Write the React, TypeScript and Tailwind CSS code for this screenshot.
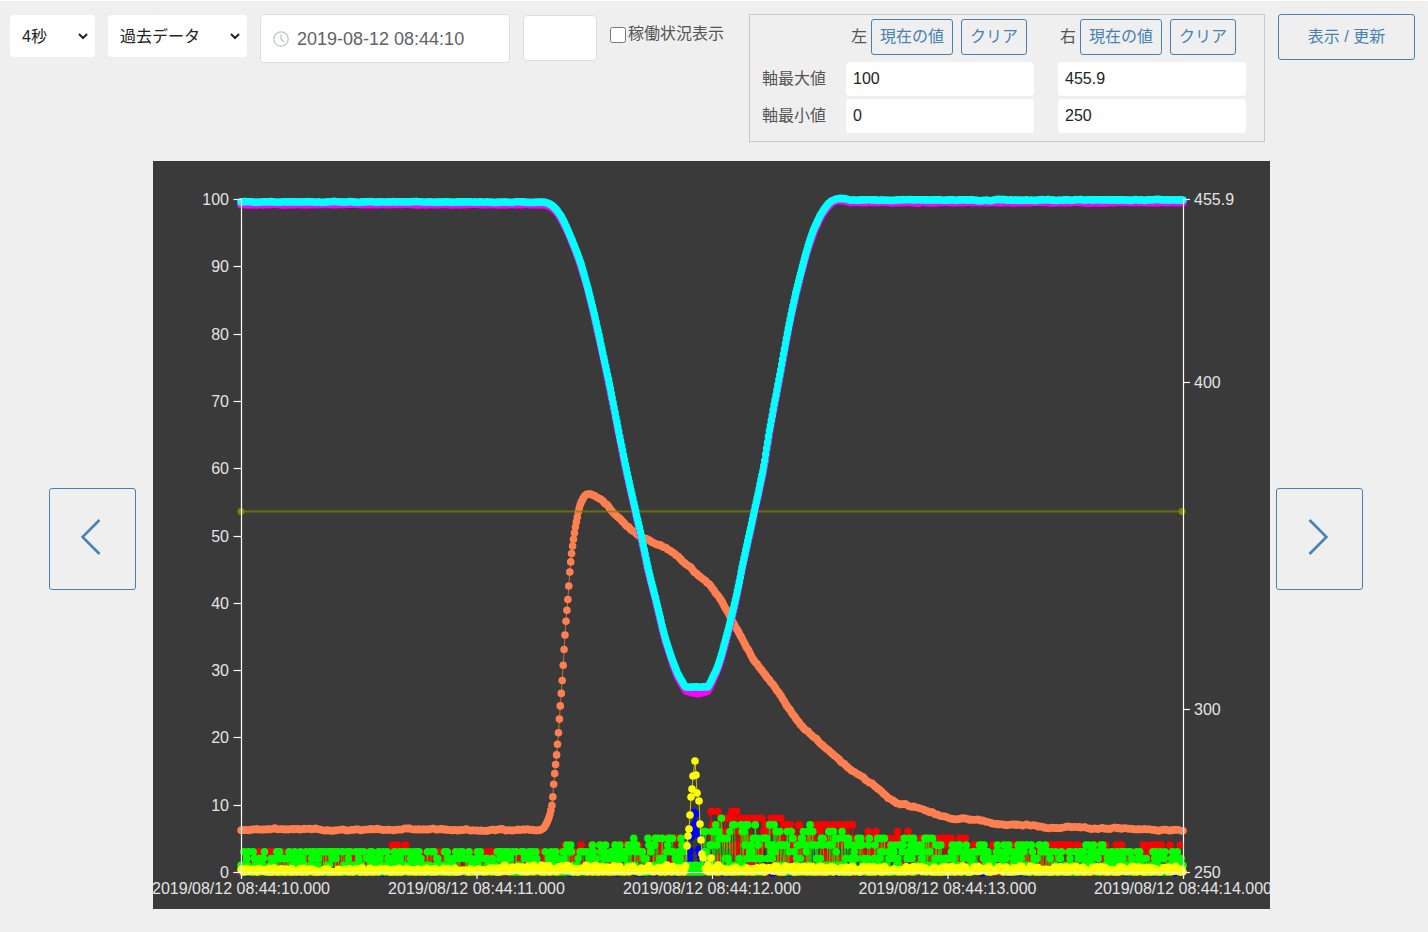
type Point = [number, number];

// plot area inside the 1117 x 748 chart
const LEFT = 88;
const RIGHT = 1030;
const TOP = 38;
const BOTTOM = 711;
const SAMPLES = 1000;

const xAt = (i: number) => LEFT + ((RIGHT - LEFT) * i) / SAMPLES;
const yAt = (value: number) => BOTTOM - ((BOTTOM - TOP) * value) / 100;

// small seeded generator so the noise is the same on every render
function createRandom(seed: number) {
  let s = seed * 7919;
  return () => {
    s = (s + 0x6d2b79f5) | 0;
    let t = Math.imul(s ^ (s >>> 15), 1 | s);
    t = (t + Math.imul(t ^ (t >>> 7), 61 | t)) ^ t;
    return ((t ^ (t >>> 14)) >>> 0) / 4294967296;
  };
}

function slope(points: Point[], i: number) {
  const a = points[Math.max(i - 1, 0)];
  const b = points[Math.min(i + 1, points.length - 1)];
  return (b[1] - a[1]) / (b[0] - a[0]);
}

// hermite curve through the points
function curve(points: Point[], x: number) {
  if (x <= points[0][0]) return points[0][1];
  for (let i = 0; i < points.length - 1; i++) {
    const [x0, y0] = points[i];
    const [x1, y1] = points[i + 1];
    if (x > x1) continue;
    const h = x1 - x0;
    const t = (x - x0) / h;
    if (y0 === y1) return y0;
    const m0 = slope(points, i) * h;
    const m1 = slope(points, i + 1) * h;
    const t2 = t * t;
    const t3 = t2 * t;
    return (
      (2 * t3 - 3 * t2 + 1) * y0 +
      (t3 - 2 * t2 + t) * m0 +
      (3 * t2 - 2 * t3) * y1 +
      (t3 - t2) * m1
    );
  }
  return points[points.length - 1][1];
}

function step(points: Point[], x: number) {
  let value = points[0][1];
  for (const [px, v] of points) if (x >= px) value = v;
  return value;
}

const pressureKeys: Point[] = [
  [88, 669], [140, 668], [200, 669], [270, 668], [330, 669], [380, 669], [388, 668], [394, 661],
  [399, 644], [401, 620], [403, 600], [405, 578], [407, 550], [409, 523], [411, 490], [413, 460],
  [415, 436], [417, 407], [420, 381], [424, 357], [427, 344], [431, 336], [437, 333], [444, 336],
  [453, 343], [467, 358], [482, 372], [494, 379], [504, 383], [517, 390], [534, 404], [547, 416],
  [559, 427], [567, 438], [584, 468], [600, 497], [614, 516], [627, 534], [647, 563], [667, 582],
  [697, 608], [711, 617], [727, 629], [740, 640], [757, 645], [774, 650], [797, 657], [822, 659],
  [850, 664], [874, 664], [899, 667], [920, 666], [940, 668], [974, 667], [990, 669], [1030, 669],
];

const positionKeys: Point[] = [
  [88, 41], [385, 41], [395, 42], [402, 47], [409, 57], [417, 74], [427, 100], [437, 135],
  [447, 179], [457, 226], [467, 277], [474, 311], [482, 347], [489, 378], [495, 407], [504, 443],
  [512, 476], [522, 506], [529, 520], [534, 526], [554, 526], [560, 516], [567, 499], [577, 462],
  [584, 432], [590, 402], [600, 356], [610, 309], [617, 267], [627, 213], [637, 159], [647, 115],
  [657, 79], [667, 55], [675, 43], [682, 38], [690, 37], [698, 39], [1030, 39],
];

const greenMax: Point[] = [
  [88, 3], [408, 4], [420, 3], [434, 4], [480, 5], [529, 4], [534, 1], [550, 6],
  [560, 7], [568, 8], [575, 7], [625, 6], [655, 7], [662, 6], [690, 5], [708, 6], [716, 5],
  [780, 4], [900, 3], [930, 4], [955, 3],
];

const redMax: Point[] = [
  [88, 3], [225, 4], [258, 3], [404, 4], [500, 5], [529, 4], [534, 1], [550, 6], [558, 9],
  [590, 8], [635, 7], [700, 6], [755, 5], [815, 4],
];

const spikeKeys: Point[] = [
  [534, 685], [535, 675], [536, 668], [537, 654], [538, 636], [539, 628], [540, 615],
  [542, 600], [543, 614], [544, 632], [546, 640], [547, 663], [548, 679], [549, 693], [550, 697],
];

const xs = Array.from({ length: SAMPLES + 1 }, (_, i) => xAt(i));

function smoothSeries(keys: Point[], noise: number, seed: number): Point[] {
  const random = createRandom(seed);
  let drift = 0;
  return xs.map((x) => {
    drift = drift * 0.8 + (random() - 0.5) * noise;
    return [x, curve(keys, x) + drift];
  });
}

function countSeries(max: Point[], seed: number, idle: number): Point[] {
  const random = createRandom(seed);
  return xs.map((x) => {
    const top = step(max, x);
    // the quiet part of the record drops to zero more often
    const rest = top <= 3 ? idle + 0.2 : idle;
    const value = random() < rest ? 0 : 1 + Math.floor(random() * top);
    return [x, yAt(value)];
  });
}

const pressure = smoothSeries(pressureKeys, 1.1, 7);
const position = smoothSeries(positionKeys, 0.5, 21);
const command = smoothSeries(positionKeys, 0.5, 33).map(([x, y]): Point => [
  x,
  y + 2.5 + 4 * Math.exp(-(((x - 544) / 12) ** 2)),
]);
const red = countSeries(redMax, 5, 0.15);
const green = countSeries(greenMax, 11, 0.15);

const blueRandom = createRandom(3);
const blue = xs.map((x): Point => {
  const r = blueRandom();
  if (x > 533 && x < 551) return [x, BOTTOM - 66 * Math.exp(-(((x - 542) / 5) ** 2)) * (0.6 + r * 0.4)];
  return [x, r < 0.03 ? BOTTOM + 1 : BOTTOM - 1];
});

const yellowRandom = createRandom(9);
const yellow: Point[] = [
  ...xs.filter((x) => x < 533).map((x): Point => {
    const lift = x > 350 ? 7 : 4;
    return [x, BOTTOM - yellowRandom() ** 2 * lift];
  }),
  ...spikeKeys,
  [555, 704],
  [558, 697],
  [561, 708],
  [565, 704],
  ...xs.filter((x) => x > 552).map((x): Point => [x, BOTTOM - yellowRandom() ** 2 * 6]),
];

const fmt = ([x, y]: Point) => `${x.toFixed(1)} ${y.toFixed(1)}`;

interface SeriesProps {
  points: Point[];
  color: string;
}

function Series({ points, color }: SeriesProps) {
  return (
    <g fill="none" stroke={color}>
      <path d={"M" + points.map(fmt).join("L")} strokeWidth="1" strokeOpacity="0.7" />
      <path d={points.map((p) => `M${fmt(p)}h0`).join("")} strokeWidth="7.6" strokeLinecap="round" />
    </g>
  );
}

const leftTicks = [0, 10, 20, 30, 40, 50, 60, 70, 80, 90, 100];
const rightTicks = [250, 300, 400, 455.9];
const timeTicks = [10, 11, 12, 13, 14];

function Chart() {
  return (
    <svg viewBox="0 0 1117 748" className="block min-w-0 flex-1 bg-[#3a3a3a]" role="img" aria-label="chart">
      <Series points={red} color="#ff0000" />
      <Series points={blue} color="#0000ff" />
      <Series points={green} color="#00ff00" />
      <Series points={yellow} color="#ffff00" />
      <Series points={pressure} color="#ff7f50" />
      <g fill="#808000" stroke="#808000">
        <path d="M88 350.5H1029" strokeWidth="2" strokeOpacity="0.7" />
        <circle cx="88" cy="350.5" r="3.2" />
        <circle cx="1029" cy="350.5" r="3.2" />
      </g>
      <Series points={command} color="#ff00ff" />
      <Series points={position} color="#00ffff" />

      <g fill="none" stroke="#ffffff" strokeWidth="1.2">
        <path d="M88.5 37.5V717M1030.5 37.5V717M80.5 711.5H1037" />
        {leftTicks.map((v) => (
          <path key={v} d={`M80.5 ${Math.round(yAt(v)) + 0.5}h8`} />
        ))}
        {rightTicks.map((v) => (
          <path key={v} d={`M1030 ${Math.round(yAt(((v - 250) / 205.9) * 100)) + 0.5}h7`} />
        ))}
        {timeTicks.map((s, i) => (
          <path key={s} d={`M${88.5 + i * 235.5} 711v7`} />
        ))}
      </g>

      <g fill="#e4e4e4" className="font-['Liberation_Sans',sans-serif] text-[16px]">
        {leftTicks.map((v) => (
          <text key={v} x="76" y={Math.round(yAt(v)) + 6} textAnchor="end">
            {v}
          </text>
        ))}
        {rightTicks.map((v) => (
          <text key={v} x="1041" y={Math.round(yAt(((v - 250) / 205.9) * 100)) + 6}>
            {v}
          </text>
        ))}
        {timeTicks.map((s, i) => (
          <text key={s} x={88 + i * 235.5} y="733" textAnchor="middle">
            {`2019/08/12 08:44:${s}.000`}
          </text>
        ))}
      </g>
    </svg>
  );
}

const outline = "rounded-[3px] border border-[#4682b4] text-[#4682b4]";

interface AxisButtonsProps {
  side: string;
}

function AxisButtons({ side }: AxisButtonsProps) {
  return (
    <div className="flex items-center gap-1 pl-[5px]">
      <span>{side}</span>
      <button type="button" className={`${outline} h-9 px-2`}>
        現在の値
      </button>
      <button type="button" className={`${outline} ml-1 h-9 px-2`}>
        クリア
      </button>
    </div>
  );
}

interface AxisInputProps {
  id: string;
  label: string;
  value: string;
}

function AxisInput({ id, label, value }: AxisInputProps) {
  return (
    <input
      id={id}
      aria-label={label}
      defaultValue={value}
      className="h-[34px] w-[188px] rounded-[4px] bg-white px-[7px] text-[#222]"
    />
  );
}

function Toolbar() {
  return (
    <form className="flex items-start gap-[13px] pr-[13px] pl-[10px]">
      <select
        aria-label="期間"
        defaultValue="4秒"
        className="mt-px h-[42px] w-[85px] rounded-[4px] border-r-4 border-white bg-white px-2 text-[#222]"
      >
        <option>4秒</option>
      </select>
      <select
        aria-label="データ種別"
        defaultValue="過去データ"
        className="mt-px h-[42px] w-[139px] rounded-[4px] border-r-4 border-white bg-white px-2 text-[#222]"
      >
        <option>過去データ</option>
      </select>
      <div className="flex h-[49px] min-w-[200px] flex-1 items-center gap-2 rounded-[4px] border border-[#dcdfe6] bg-white pl-3">
        <svg viewBox="0 0 16 16" className="size-4 shrink-0" fill="none" stroke="#c0c4cc" strokeWidth="1.3">
          <circle cx="8" cy="8" r="7.2" />
          <path d="M8 3.5V8l3 3" />
        </svg>
        <input
          aria-label="日時"
          defaultValue="2019-08-12 08:44:10"
          className="w-full min-w-0 bg-transparent text-[18px] text-[#606266]"
        />
      </div>
      <input
        aria-label="ミリ秒"
        className="mt-px h-[46px] w-[74px] rounded-[4px] border border-[#dcdfe6] bg-white px-2"
      />
      <label className="mt-2 mr-3 flex items-center gap-[2px] whitespace-nowrap">
        <input type="checkbox" className="mt-[2px] size-4" />
        稼働状況表示
      </label>
      <fieldset className="border border-[#c8c8c8] pt-1 pr-[18px] pb-2 pl-3">
        <div className="grid grid-cols-[84px_209px_191px]">
          <span />
          <AxisButtons side="左" />
          <AxisButtons side="右" />
        </div>
        <div className="mt-[7px] grid grid-cols-[84px_212px_188px] items-center gap-y-[3px]">
          <label htmlFor="left-max">軸最大値</label>
          <AxisInput id="left-max" label="左 軸最大値" value="100" />
          <AxisInput id="right-max" label="右 軸最大値" value="455.9" />
          <label htmlFor="left-min">軸最小値</label>
          <AxisInput id="left-min" label="左 軸最小値" value="0" />
          <AxisInput id="right-min" label="右 軸最小値" value="250" />
        </div>
      </fieldset>
      <button type="button" className={`${outline} h-[46px] w-[137px] shrink-0`}>
        表示 / 更新
      </button>
    </form>
  );
}

interface NavButtonProps {
  label: string;
  path: string;
}

function NavButton({ label, path }: NavButtonProps) {
  return (
    <button
      type="button"
      aria-label={label}
      className={`${outline} mt-2 flex h-[102px] w-[87px] shrink-0 items-center justify-center pr-1 pb-1`}
    >
      <svg viewBox="0 0 20 36" className="h-9 w-5" fill="none" stroke="currentColor" strokeWidth="2.6">
        <path d={path} />
      </svg>
    </button>
  );
}

export default function App() {
  return (
    <div className="min-h-screen border-t border-white bg-[#efefef] pt-[13px] font-['Liberation_Sans','Noto_Sans_CJK_JP',sans-serif] text-[16px] leading-6 text-[#555]">
      <Toolbar />
      <main className="mt-[19px] flex items-center pr-[65px] pb-[22px] pl-[49px]">
        <NavButton label="前へ" path="M18.5 1 1.5 18l17 17" />
        <div className="mr-[6px] ml-[17px] flex min-w-0 flex-1">
          <Chart />
        </div>
        <NavButton label="次へ" path="M1.5 1l17 17-17 17" />
      </main>
    </div>
  );
}
